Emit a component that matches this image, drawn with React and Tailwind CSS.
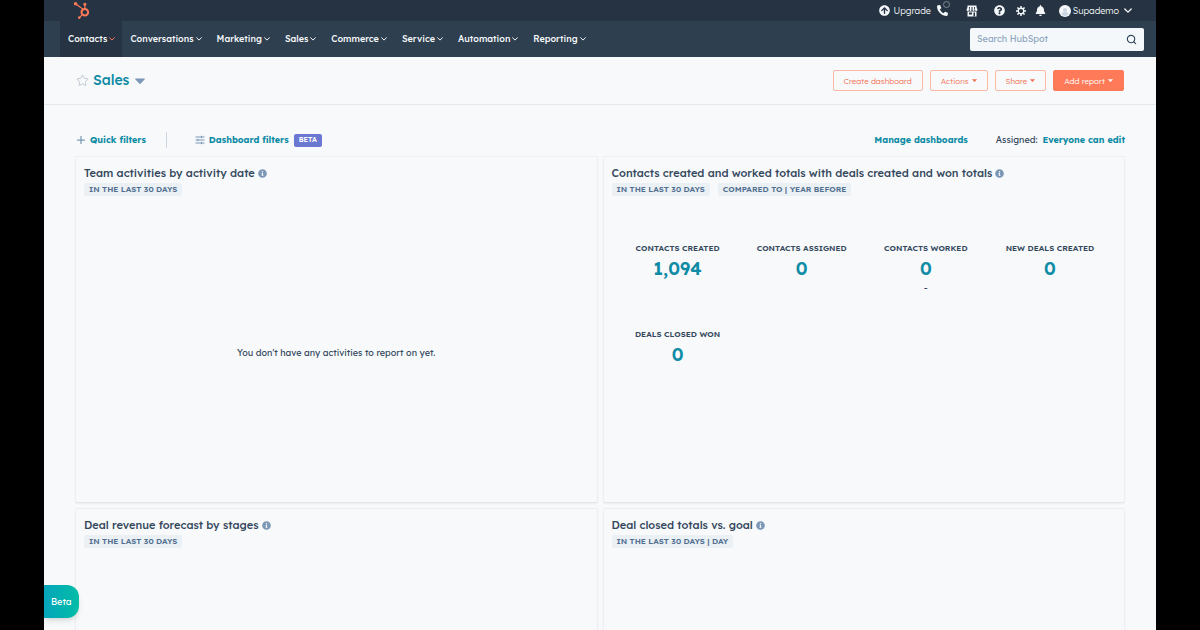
import clsx from 'clsx';
import {
  FaArrowCircleUp,
  FaBell,
  FaHubspot,
  FaInfoCircle,
  FaPhoneAlt,
  FaQuestionCircle,
} from 'react-icons/fa';
import { Plus, Search, Star } from 'lucide-react';

const NAV = [
  'Contacts',
  'Conversations',
  'Marketing',
  'Sales',
  'Commerce',
  'Service',
  'Automation',
  'Reporting',
];

const STATS = [
  { label: 'Contacts created', value: '1,094' },
  { label: 'Contacts assigned', value: '0' },
  { label: 'Contacts worked', value: '0', note: '-' },
  { label: 'New deals created', value: '0' },
  { label: 'Deals closed won', value: '0' },
];

function Caret({ className }) {
  return (
    <svg viewBox="0 0 10 6" className={className} aria-hidden="true">
      <path d="M0.6 0.4h8.8c.5 0 .7.5.4.8L5.5 5.7a.7.7 0 0 1-1 0L.2 1.2C-.1.9.1.4.6.4z" fill="currentColor" />
    </svg>
  );
}

function Chevron({ className }) {
  return (
    <svg viewBox="0 0 12 8" className={className} aria-hidden="true">
      <path
        d="M1.2 1.5L6 6.2l4.8-4.7"
        fill="none"
        stroke="currentColor"
        strokeWidth="2"
        strokeLinecap="round"
        strokeLinejoin="round"
      />
    </svg>
  );
}

function SlidersIcon() {
  return (
    <svg width="10" height="10" viewBox="0 0 10 10" className="text-[#7c98b6]" aria-hidden="true">
      <path
        d="M0.5 2h9M0.5 5h9M0.5 8h9M6.5 0.8v2.4M3 3.8v2.4M6.5 6.8v2.4"
        fill="none"
        stroke="currentColor"
        strokeWidth="1"
      />
    </svg>
  );
}

function MarketIcon() {
  return (
    <svg width="12" height="12" viewBox="0 0 24 24" aria-hidden="true">
      <path d="M3 1h18v3H3z" fill="currentColor" />
      <path d="M3 4h3v5a2.5 2.5 0 0 1-5 1zM8 4h3v6a2 2 0 0 1-4 0zM13 4h3l1 6a2 2 0 0 1-4 0zM18 4h3l2 6a2.5 2.5 0 0 1-5-1z" fill="currentColor" />
      <path d="M3 13h18v10H3z" fill="currentColor" />
      <path d="M6 15h6v4H6zM15 15h3v8h-3z" fill="#253342" />
    </svg>
  );
}

function GearIcon() {
  return (
    <svg width="10" height="10" viewBox="0 0 20 20" fill="none" stroke="currentColor" aria-hidden="true">
      <circle cx="10" cy="10" r="5.5" strokeWidth="2.6" />
      <path
        d="M10 0v4M10 16v4M0 10h4M16 10h4M2.9 2.9l2.8 2.8M14.3 14.3l2.8 2.8M17.1 2.9l-2.8 2.8M5.7 14.3l-2.8 2.8"
        strokeWidth="3"
      />
    </svg>
  );
}

function Avatar() {
  return (
    <svg width="12" height="12" viewBox="0 0 24 24" aria-hidden="true">
      <circle cx="12" cy="12" r="12" fill="#f5f8fa" />
      <circle cx="12" cy="10" r="4" fill="#cbd6e2" />
      <path d="M5 19c0-4 3-5 7-5s7 1 7 5a10 10 0 0 1-14 0z" fill="#cbd6e2" />
    </svg>
  );
}

function TopBar() {
  return (
    <div className="flex h-[21px] items-center justify-between bg-[#253342] pl-[29px] pr-6 text-[#f5f8fa]">
      <a href="#home" aria-label="HubSpot home" className="text-[#ff7a59]">
        <FaHubspot size={17} />
      </a>
      <div className="flex items-center text-[9px] font-light">
        <a href="#upgrade" className="mr-[6px] flex items-center gap-[3px]">
          <FaArrowCircleUp size={11} />
          Upgrade
        </a>
        <button type="button" aria-label="Calling" className="relative mr-4 pr-[2px]">
          <FaPhoneAlt size={11} />
          <span className="absolute -top-1 right-0 size-[7px] rounded-full border border-[#7d8994] bg-[#253342]" />
        </button>
        <button type="button" aria-label="Marketplace" className="mr-4">
          <MarketIcon />
        </button>
        <button type="button" aria-label="Help" className="mr-[11px]">
          <FaQuestionCircle size={11} />
        </button>
        <button type="button" aria-label="Settings" className="mr-[9px]">
          <GearIcon />
        </button>
        <button type="button" aria-label="Notifications" className="mr-[13px]">
          <FaBell size={11} />
        </button>
        <button type="button" className="flex items-center gap-[2px]">
          <Avatar />
          Supademo
          <Chevron className="ml-[3px] w-[8px]" />
        </button>
      </div>
    </div>
  );
}

function NavBar() {
  return (
    <div className="flex h-9 items-center justify-between bg-[#2e3f50] pl-4 pr-3">
      <nav className="flex h-full">
        {NAV.map((item, i) => (
          <button
            key={item}
            type="button"
            className={clsx(
              'flex items-center gap-[2px] pl-2 pr-[7px] text-[9px] font-medium text-[#f5f8fa]',
              i === 0 && 'bg-[#253342]'
            )}
          >
            {item}
            <Chevron className={clsx('w-[6px]', i === 0 && 'text-[#ff7a59]')} />
          </button>
        ))}
      </nav>
      <label className="flex h-[23px] w-[174px] items-center rounded-[2px] bg-[#f5f8fa] px-[7px]">
        <input
          type="search"
          aria-label="Search HubSpot"
          placeholder="Search HubSpot"
          className="min-w-0 flex-1 bg-transparent text-[9px] outline-none placeholder:text-[#8ea5bf]"
        />
        <Search size={11} strokeWidth={2.5} className="text-[#33475b]" />
      </label>
    </div>
  );
}

function ActionButton({ children, caret, primary }) {
  return (
    <button
      type="button"
      className={clsx(
        'flex h-[21px] items-center gap-[3px] rounded-[2px] border px-[10px] text-[8px] font-light',
        primary ? 'border-[#ff7a59] bg-[#ff7a59] text-white' : 'border-[#fbb8a5] text-[#f2704f]'
      )}
    >
      {children}
      {caret && <Caret className="w-[5px]" />}
    </button>
  );
}

function DashboardHeader() {
  return (
    <header className="flex h-12 items-center justify-between border-b border-[#e5e9ee] px-8">
      <div className="flex items-center">
        <button type="button" aria-label="Favorite" className="text-[#b4bcc6]">
          <Star size={13} strokeWidth={1.5} />
        </button>
        <h1 className="ml-1 text-[14px] font-medium text-[#0e8ba5]">Sales</h1>
        <button type="button" aria-label="Switch dashboard" className="ml-[6px] text-[#7c98b6]">
          <Caret className="w-[10px]" />
        </button>
      </div>
      <div className="flex gap-[7px]">
        <ActionButton>Create dashboard</ActionButton>
        <ActionButton caret>Actions</ActionButton>
        <ActionButton caret>Share</ActionButton>
        <ActionButton caret primary>
          Add report
        </ActionButton>
      </div>
    </header>
  );
}

function FilterBar() {
  return (
    <div className="flex items-center justify-between pb-2 pt-[27px] text-[9px] font-bold text-[#0e8ba5]">
      <div className="flex h-4 items-center">
        <button type="button" className="flex items-center gap-[3px]">
          <Plus size={12} strokeWidth={2.5} className="text-[#7c98b6]" />
          Quick filters
        </button>
        <span className="ml-5 mr-7 h-4 w-px bg-[#cbd6e2]" />
        <button type="button" className="flex items-center gap-1">
          <SlidersIcon />
          Dashboard filters
          <span className="ml-px flex h-[13px] items-center rounded-[2px] bg-[#6a78d1] px-[5px] text-[7px] font-semibold text-white">
            BETA
          </span>
        </button>
      </div>
      <div className="flex items-center">
        <a href="#manage">Manage dashboards</a>
        <span className="ml-7 mr-[5px] font-normal text-[#33475b]">Assigned:</span>
        <a href="#access">Everyone can edit</a>
      </div>
    </div>
  );
}

function ReportCard({ title, tags, children }) {
  return (
    <section className="flex h-[347px] flex-col rounded-[2px] border border-[#edf0f3] border-b-[#e3e7eb] px-2 pt-2 shadow-xs">
      <h2 className="mb-[2px] flex items-center gap-[3px] text-[11px] leading-4 font-medium text-[#33475b]">
        {title}
        <FaInfoCircle size={9} className="text-[#7c98b6]" />
      </h2>
      <div className="flex gap-2">
        {tags.map((tag) => (
          <span
            key={tag}
            className="rounded-[2px] bg-[#eaf0f4] px-[5px] text-[8px] leading-[13px] font-semibold text-[#516f90] uppercase"
          >
            {tag}
          </span>
        ))}
      </div>
      {children}
    </section>
  );
}

export default function App() {
  return (
    <div className="h-screen bg-black px-11 font-['Lexend_Deca','Inter',sans-serif]">
      <div className="relative h-full overflow-hidden bg-[#f7f9fb]">
        <TopBar />
        <NavBar />
        <DashboardHeader />
        <main className="px-[31px]">
          <FilterBar />
          <div className="grid grid-cols-2 gap-[5px]">
            <ReportCard title="Team activities by activity date" tags={['In the last 30 days']}>
              <p className="flex flex-1 items-center justify-center pt-2 text-[9px] text-[#33475b]">
                You don't have any activities to report on yet.
              </p>
            </ReportCard>
            <ReportCard
              title="Contacts created and worked totals with deals created and won totals"
              tags={['In the last 30 days', 'Compared to | Year before']}
            >
              <dl className="mt-[47px] grid auto-rows-[86px] grid-cols-4 px-1 text-center">
                {STATS.map(({ label, value, note }) => (
                  <div key={label}>
                    <dt className="text-[8px] leading-[10px] font-semibold text-[#33475b] uppercase">{label}</dt>
                    <dd className="mt-[5px] text-[18px] leading-[22px] font-semibold text-[#0e8ba5]">{value}</dd>
                    {note && <dd className="text-[10px] leading-4 text-[#33475b]">{note}</dd>}
                  </div>
                ))}
              </dl>
            </ReportCard>
            <ReportCard title="Deal revenue forecast by stages" tags={['In the last 30 days']} />
            <ReportCard title="Deal closed totals vs. goal" tags={['In the last 30 days | Day']} />
          </div>
        </main>
        <button
          type="button"
          className="absolute bottom-3 left-0 h-[33px] rounded-r-xl bg-linear-to-r from-[#07a5bb] to-[#04bda6] px-[7px] text-[9px] text-white shadow-md"
        >
          Beta
        </button>
      </div>
    </div>
  );
}
